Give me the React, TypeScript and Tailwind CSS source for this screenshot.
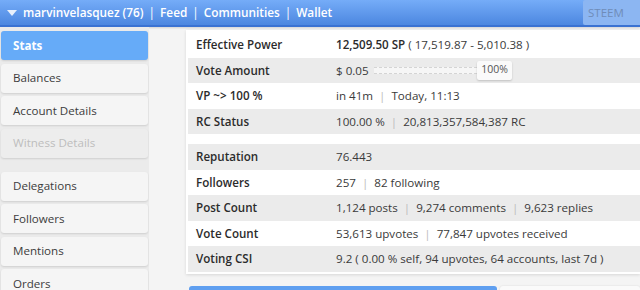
import React from 'react';

const navItems = [
  { label: 'Stats', active: true },
  { label: 'Balances' },
  { label: 'Account Details' },
  { label: 'Witness Details', disabled: true },
];

const navItems2 = ['Delegations', 'Followers', 'Mentions', 'Orders'];

function Sep() {
  return <span className="text-[#bdbdbd] mx-[6px]">|</span>;
}

function Row({ label, children, shaded }: { label: string; children: React.ReactNode; shaded?: boolean }) {
  return (
    <div className={`grid grid-cols-[148px_1fr] items-center h-[25.5px] ${shaded ? 'bg-[#ebebeb]' : 'bg-white'}`}>
      <div className="pl-[8px] font-semibold text-[#2b2b2b]">{label}</div>
      <div className="text-[#3a3a3a] whitespace-nowrap">{children}</div>
    </div>
  );
}

export default function App() {
  return (
    <div className="w-[640px] h-[290px] overflow-hidden bg-[#f4f4f4] text-[11.6px] font-['Open_Sans',sans-serif]">
      {/* Header */}
      <div className="h-[27px] bg-gradient-to-b from-[#75acf8] to-[#4c87e0] border-b-2 border-[#3a72d2] shadow-[0_1px_2px_rgba(0,0,0,0.15)] flex items-center text-white font-semibold text-[11.8px]">
        <svg width="10" height="6" viewBox="0 0 10 6" className="ml-[7px] mr-[6px]">
          <path d="M0 0 L10 0 L5 6 Z" fill="#e8f0fc" />
        </svg>
        <span>marvinvelasquez (76)</span>
        <span className="mx-[5px] font-normal">|</span>
        <span>Feed</span>
        <span className="mx-[5px] font-normal">|</span>
        <span>Communities</span>
        <span className="mx-[5px] font-normal">|</span>
        <span>Wallet</span>
        <div className="ml-auto self-start h-[25px] w-[57px] bg-[#8cb6f2] rounded-tl-[2px] rounded-bl-[2px] flex items-center pl-[5px] text-[11.5px] font-normal text-[#6f8cb8]">
          STEEM
        </div>
      </div>

      <div className="flex h-[263px]">
        {/* Sidebar */}
        <div className="w-[149px] shrink-0 pt-[4px] flex flex-col gap-[3.5px] pl-[1px] pr-[1px] bg-[#ebebeb] overflow-hidden">
          {navItems.map((item) => (
            <div
              key={item.label}
              className={`shrink-0 h-[29px] rounded-[3px] flex items-center pl-[12px] shadow-[0_1px_2px_rgba(0,0,0,0.12)] ${
                item.active
                  ? 'bg-[#66abf8] text-white font-bold'
                  : item.disabled
                  ? 'bg-[#ededed] text-[#bdbdbd]'
                  : 'bg-[#f5f5f5] text-[#3c3c3c]'
              }`}
            >
              {item.label}
            </div>
          ))}
          <div className="shrink-0 h-[7px]" />
          {navItems2.map((label) => (
            <div
              key={label}
              className="shrink-0 h-[29px] rounded-[3px] flex items-center pl-[12px] bg-[#f5f5f5] text-[#3c3c3c] shadow-[0_1px_2px_rgba(0,0,0,0.12)]"
            >
              {label}
            </div>
          ))}
        </div>

        {/* Main */}
        <div className="flex-1 pl-[37px] pt-[3px]">
          <div className="bg-white p-[2px] pr-0 shadow-[0_1px_3px_rgba(0,0,0,0.12)]">
            <Row label="Effective Power">
              <span className="font-semibold text-[#2b2b2b]">12,509.50 SP</span> ( 17,519.87 - 5,010.38 )
            </Row>
            <Row label="Vote Amount" shaded>
              <div className="flex items-center">
                <span className="w-[38px]">$ 0.05</span>
                <div className="w-[103px] h-[7px] border-y border-dashed border-[#d4d4d4] bg-[#f6f6f6]" />
                <div className="h-[19px] w-[35px] justify-center flex items-center bg-[#fafafa] rounded-[2px] shadow-[0_1px_2px_rgba(0,0,0,0.18)] text-[10.5px] text-[#555]">
                  100%
                </div>
              </div>
            </Row>
            <Row label="VP ~> 100 %">
              in 41m<Sep />Today, 11:13
            </Row>
            <Row label="RC Status" shaded>
              100.00 %<Sep />20,813,357,584,387 RC
            </Row>
            <div className="h-[10px] bg-white" />
            <Row label="Reputation" shaded>
              76.443
            </Row>
            <Row label="Followers">
              257<Sep />82 following
            </Row>
            <Row label="Post Count" shaded>
              1,124 posts<Sep />9,274 comments<Sep />9,623 replies
            </Row>
            <Row label="Vote Count">
              53,613 upvotes<Sep />77,847 upvotes received
            </Row>
            <Row label="Voting CSI" shaded>
              9.2 ( 0.00 % self, 94 upvotes, 64 accounts, last 7d )
            </Row>
          </div>

          <div className="mt-[12px] flex gap-[3px] pl-[3px]">
            <div className="w-[308px] h-[10px] bg-[#5f9ff0] rounded-t-[3px]" />
            <div className="flex-1 h-[10px] bg-[#fafafa] rounded-t-[3px] shadow-[0_0_2px_rgba(0,0,0,0.12)]" />
          </div>
        </div>
      </div>
    </div>
  );
}
